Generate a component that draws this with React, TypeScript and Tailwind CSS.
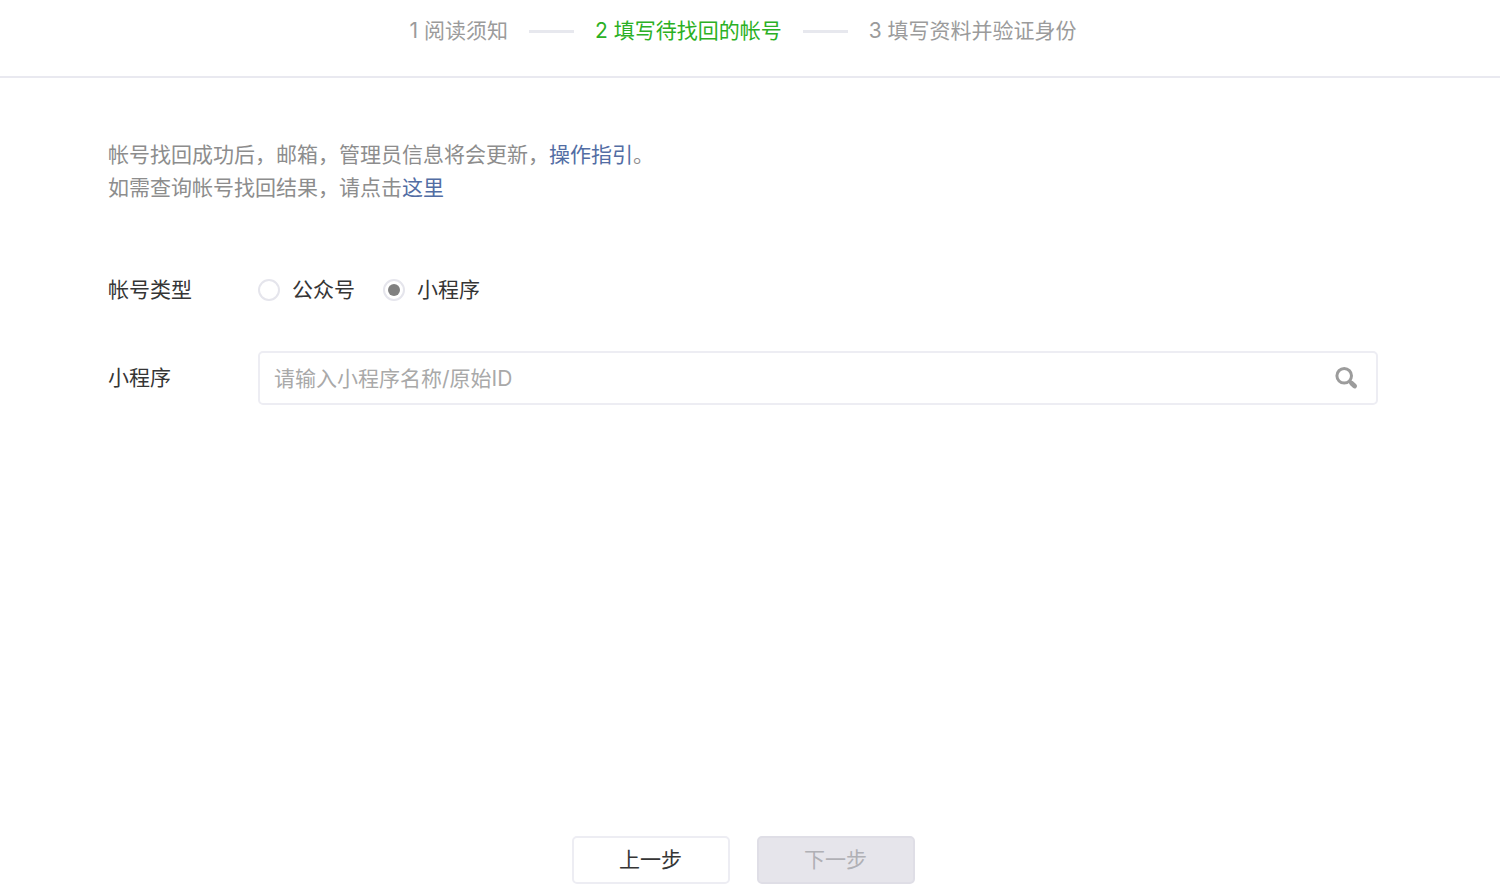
import { Fragment, useState } from "react";
import { twMerge as tw } from "tailwind-merge";

const steps = ["1 阅读须知", "2 填写待找回的帐号", "3 填写资料并验证身份"];

const accountTypes = [
    { value: "official", label: "公众号" },
    { value: "mini", label: "小程序" },
];

interface StepBarProps {
    current: number;
}

const StepBar = ({ current }: StepBarProps) => {
    return (
        <header className="border-b-2 border-[#e9e9f0] pr-3.5">
            <ol className="flex h-[76px] items-start justify-center gap-[21px] pt-[15px] leading-8 text-[#9b9b9b]">
                {steps.map((step, index) => (
                    <Fragment key={step}>
                        {index > 0 && (
                            <li aria-hidden="true" className="mt-[15px] h-[3px] w-[45px] bg-[#e7e8ee]"></li>
                        )}
                        <li className={tw("whitespace-nowrap", index === current && "text-[#2bb024]")}>{step}</li>
                    </Fragment>
                ))}
            </ol>
        </header>
    );
};

const SearchIcon = () => {
    return (
        <svg width="24" height="24" viewBox="0 0 24 24" fill="none" stroke="#9c9c9c" aria-hidden="true">
            <circle cx="10.2" cy="9.8" r="7.3" strokeWidth="3" />
            <path d="M15 14.6 18 17.6" strokeWidth="3.6" />
            <path d="M17.6 17.2 20.6 20" strokeWidth="4.8" strokeLinecap="round" />
        </svg>
    );
};

const App = () => {
    const [accountType, setAccountType] = useState("mini");
    const [keyword, setKeyword] = useState("");

    return (
        <div className="flex min-h-screen flex-col bg-white font-['Inter','Noto_Sans_CJK_SC',sans-serif] text-[21px] text-[#353535]">
            <StepBar current={1} />

            <main className="flex grow flex-col pt-[60px] pr-[122px] pb-1.5 pl-[108px]">
                <div className="leading-[33px] text-[#8d8d8d]">
                    <p>
                        帐号找回成功后，邮箱，管理员信息将会更新，
                        <a href="#guide" className="text-[#526da4]">
                            操作指引
                        </a>
                        。
                    </p>
                    <p>
                        如需查询帐号找回结果，请点击
                        <a href="#result" className="text-[#526da4]">
                            这里
                        </a>
                    </p>
                </div>

                <form className="flex grow flex-col" onSubmit={(e) => e.preventDefault()}>
                    <div
                        role="radiogroup"
                        aria-labelledby="account-type"
                        className="mt-[70px] flex items-center leading-8"
                    >
                        <span id="account-type" className="w-[150px] shrink-0">
                            帐号类型
                        </span>
                        <div className="flex gap-7">
                            {accountTypes.map(({ value, label }) => (
                                <label key={value} className="flex cursor-pointer items-center gap-3">
                                    <input
                                        type="radio"
                                        name="accountType"
                                        value={value}
                                        checked={accountType === value}
                                        onChange={() => setAccountType(value)}
                                        className="grid size-[22px] appearance-none place-items-center rounded-full border-2 border-[#e5e5ec] before:size-3 before:rounded-full checked:before:bg-[#808080]"
                                    />
                                    {label}
                                </label>
                            ))}
                        </div>
                    </div>

                    <div className="mt-[45px] flex items-center">
                        <label htmlFor="keyword" className="w-[150px] shrink-0">
                            小程序
                        </label>
                        <div className="flex h-[54px] grow items-center rounded-[5px] border-2 border-[#ededf3] pr-[18px]">
                            <input
                                id="keyword"
                                type="text"
                                value={keyword}
                                onChange={(e) => setKeyword(e.target.value)}
                                placeholder="请输入小程序名称/原始ID"
                                className="h-full min-w-0 grow px-[14px] outline-none placeholder:text-[#a9a9a9]"
                            />
                            <button type="button" aria-label="搜索" className="cursor-pointer">
                                <SearchIcon />
                            </button>
                        </div>
                    </div>

                    <div className="mt-auto flex justify-center gap-[27px] pt-10">
                        <button
                            type="button"
                            className="h-12 w-[158px] rounded-[5px] border-2 border-[#ededf3] bg-white"
                        >
                            上一步
                        </button>
                        <button
                            type="submit"
                            disabled
                            className="h-12 w-[158px] rounded-[5px] border-2 border-[#dfdee6] bg-[#e6e5eb] text-[#b0b0b5]"
                        >
                            下一步
                        </button>
                    </div>
                </form>
            </main>
        </div>
    );
};

export default App;
